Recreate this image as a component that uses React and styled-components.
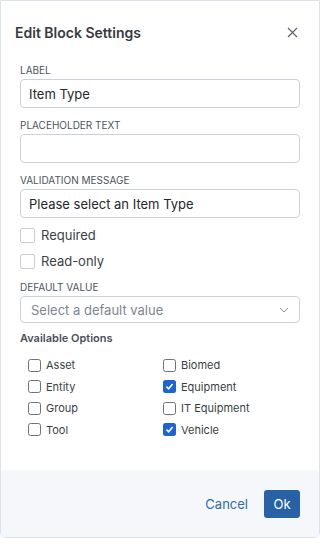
import React from "react";
import styled, { createGlobalStyle } from "styled-components";

const Global = createGlobalStyle`
  html, body { margin: 0; padding: 0; background: #ffffff; }
  body { font-family: Inter, "Noto Sans", "Liberation Sans", sans-serif; }
  * { box-sizing: border-box; }
`;

const Dialog = styled.div`
  width: 320px;
  height: 538px;
  border: 1px solid #dde2ea;
  border-radius: 0 0 6px 6px;
  background: #fff;
  display: flex;
  flex-direction: column;
  overflow: hidden;
`;

const Header = styled.div`
  display: flex;
  align-items: center;
  justify-content: space-between;
  padding: 10px 20px 0 14px;
  height: 52px;
`;

const Title = styled.h2`
  margin: 0;
  font-size: 14px;
  font-weight: 600;
  color: #363a41;
`;

const CloseBtn = styled.button`
  border: 0;
  background: none;
  padding: 0;
  width: 14px;
  height: 14px;
  display: flex;
  align-items: center;
  justify-content: center;
  color: #5d6573;
`;

const Body = styled.div`
  flex: 1;
  padding: 11px 19px 0 19px;
  display: flex;
  flex-direction: column;
`;

const Field = styled.div`
  display: flex;
  flex-direction: column;
  margin-top: ${(p) => p.$mt ?? 0}px;
  margin-bottom: ${(p) => p.$mb ?? 11}px;
`;

const FieldLabel = styled.label`
  font-size: 10px;
  line-height: 12px;
  color: #4d5462;
  text-transform: uppercase;
  margin-bottom: 3px;
`;

const Input = styled.div`
  height: ${(p) => p.$h ?? 29}px;
  border: 1px solid #ccd1d9;
  border-radius: 4px;
  padding: 0 8px;
  display: flex;
  align-items: center;
  font-size: 13px;
  color: #24272c;
`;

const Select = styled(Input)`
  justify-content: space-between;
  color: #80868f;
  padding: 0 10px 0 10px;
`;

const CheckRow = styled.label`
  display: flex;
  align-items: center;
  gap: 6px;
  height: 26px;
  font-size: 13px;
  color: #3a3f47;
`;

const BigBox = styled.span`
  width: 15px;
  height: 15px;
  border: 1px solid #c9ced6;
  border-radius: 2px;
  background: #fff;
`;

const Section = styled.div`
  font-size: 11px;
  line-height: 14px;
  font-weight: 600;
  color: #4a505c;
  margin: 8px 0 13px 0;
`;

const OptionsGrid = styled.div`
  display: grid;
  grid-template-columns: 135px 135px;
  row-gap: 7.5px;
  padding-left: 8px;
`;

const Option = styled.label`
  display: flex;
  align-items: center;
  gap: 5px;
  font-size: 11px;
  line-height: 14px;
  color: #3a3f47;
`;

const SmallBox = styled.span`
  width: 13px;
  height: 13px;
  border-radius: 2.5px;
  border: ${(p) => (p.$checked ? "none" : "1px solid #6f7379")};
  background: ${(p) => (p.$checked ? "#1e63d6" : "#fff")};
  display: flex;
  align-items: center;
  justify-content: center;
`;

const Footer = styled.div`
  height: 67px;
  background: #f5f7fa;
  display: flex;
  align-items: center;
  justify-content: flex-end;
  gap: 16px;
  padding: 0 19px 0 0;
`;

const LinkBtn = styled.button`
  border: 0;
  background: none;
  padding: 0;
  font-family: inherit;
  font-size: 13px;
  color: #2e6bb2;
`;

const PrimaryBtn = styled.button`
  border: 0;
  background: #2762a6;
  color: #fff;
  font-family: inherit;
  font-size: 13px;
  width: 36px;
  height: 28px;
  border-radius: 3px;
`;

const options = [
  ["Asset", false],
  ["Biomed", false],
  ["Entity", false],
  ["Equipment", true],
  ["Group", false],
  ["IT Equipment", false],
  ["Tool", false],
  ["Vehicle", true],
];

export default function App() {
  return (
    <>
      <Global />
      <Dialog>
        <Header>
          <Title>Edit Block Settings</Title>
          <CloseBtn aria-label="Close">
            <svg width="11" height="11" viewBox="0 0 11 11">
              <path d="M1 1L10 10M10 1L1 10" stroke="currentColor" strokeWidth="1.2" />
            </svg>
          </CloseBtn>
        </Header>
        <Body>
          <Field>
            <FieldLabel>Label</FieldLabel>
            <Input>Item Type</Input>
          </Field>
          <Field>
            <FieldLabel>Placeholder Text</FieldLabel>
            <Input />
          </Field>
          <Field $mb={4}>
            <FieldLabel>Validation Message</FieldLabel>
            <Input>Please select an Item Type</Input>
          </Field>
          <CheckRow>
            <BigBox />
            Required
          </CheckRow>
          <CheckRow>
            <BigBox />
            Read-only
          </CheckRow>
          <Field $mb={0} $mt={7}>
            <FieldLabel>Default Value</FieldLabel>
            <Select $h={27}>
              Select a default value
              <svg width="10" height="6" viewBox="0 0 10 6">
                <path d="M1 1L5 5L9 1" fill="none" stroke="#8d939c" strokeWidth="1" />
              </svg>
            </Select>
          </Field>
          <Section>Available Options</Section>
          <OptionsGrid>
            {options.map(([name, checked]) => (
              <Option key={name}>
                <SmallBox $checked={checked}>
                  {checked && (
                    <svg width="9" height="9" viewBox="0 0 9 9">
                      <path d="M1.5 4.6L3.6 6.7L7.6 2" fill="none" stroke="#fff" strokeWidth="1.6" />
                    </svg>
                  )}
                </SmallBox>
                {name}
              </Option>
            ))}
          </OptionsGrid>
        </Body>
        <Footer>
          <LinkBtn>Cancel</LinkBtn>
          <PrimaryBtn>Ok</PrimaryBtn>
        </Footer>
      </Dialog>
    </>
  );
}
